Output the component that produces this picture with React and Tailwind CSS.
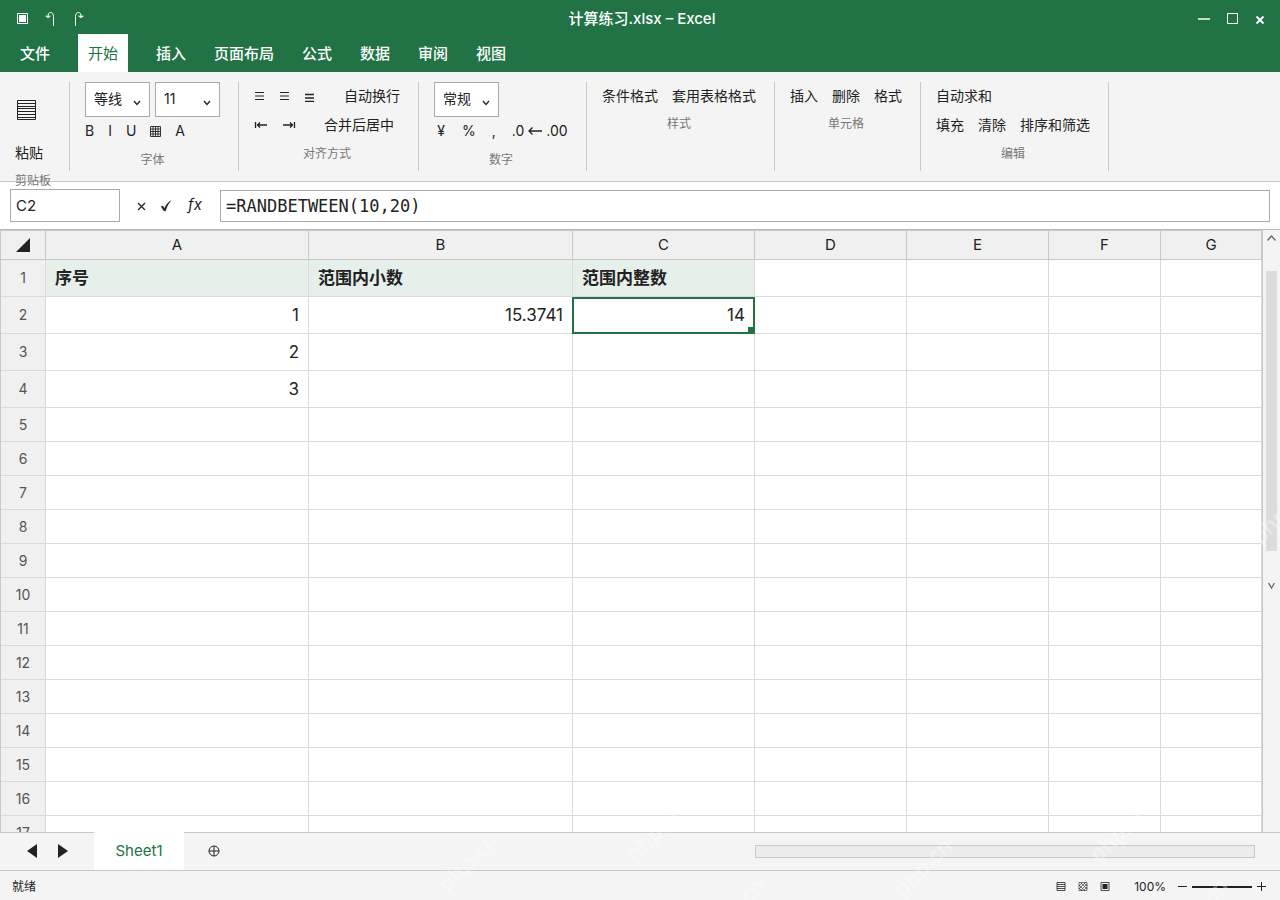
import clsx from "clsx";

const MENU = ["文件", "开始", "插入", "页面布局", "公式", "数据", "审阅", "视图"];

const COLUMNS = [
  { name: "A", width: "w-[263px]" },
  { name: "B", width: "w-[264px]" },
  { name: "C", width: "w-[182px]" },
  { name: "D", width: "w-[152px]" },
  { name: "E", width: "w-[142px]" },
  { name: "F", width: "w-[112px]" },
  { name: "G", width: "w-[101px]" },
];

const DATA = [
  ["序号", "范围内小数", "范围内整数"],
  ["1", "15.3741", "14"],
  ["2"],
  ["3"],
];

const ROWS = Array.from({ length: 17 }, (_, i) => i + 1);

const WATERMARKS = [
  { x: 467, y: 862 },
  { x: 655, y: 832 },
  { x: 922, y: 867 },
  { x: 1118, y: 832 },
  { x: 735, y: 907 },
  { x: 1198, y: 907 },
  { x: 1280, y: 514 },
];

function Icon({ className, width = 14, height = 14, children }) {
  return (
    <svg
      className={className}
      width={width}
      height={height}
      viewBox={`0 0 ${width} ${height}`}
      fill="none"
      stroke="currentColor"
      aria-hidden="true"
    >
      {children}
    </svg>
  );
}

function TitleBar() {
  return (
    <header className="grid h-[34px] grid-cols-3 items-center pt-1 pr-[13px] pl-[17px] text-white">
      <div className="flex items-center gap-4">
        <button aria-label="保存" className="flex h-4 w-3 items-center justify-center">
          <Icon width={12} height={12} className="shrink-0">
            <path d="M.5.5h10v10h-10z" />
            <path d="M2 2h7v7h-7z" fill="currentColor" stroke="none" />
          </Icon>
        </button>
        <button aria-label="撤消" className="flex w-3 justify-center">
          <Icon width={12} height={14}>
            <path d="M8.500 14V4.500C8.500 2 7.500 .5 5.500 .5S3 2 3 5" />
            <path d="M.5 4L3 6l2.500-2z" fill="currentColor" strokeWidth=".5" />
          </Icon>
        </button>
        <button aria-label="恢复" className="flex w-3 justify-center">
          <Icon width={12} height={14}>
            <path d="M2.500 14V4.500C2.500 2 3.500 .5 5.500 .5S8 2 8 5" />
            <path d="M5.500 4L8 6l2.500-2z" fill="currentColor" strokeWidth=".5" />
          </Icon>
        </button>
      </div>
      <h1 className="text-center text-[15px] font-medium">计算练习.xlsx – Excel</h1>
      <div className="flex items-center justify-end gap-[14px]">
        <button aria-label="最小化">
          <Icon>
            <path d="M1 7h12" strokeWidth="1.500" />
          </Icon>
        </button>
        <button aria-label="最大化">
          <Icon>
            <path d="M2.500 1.500h10v10h-10z" />
          </Icon>
        </button>
        <button aria-label="关闭">
          <Icon>
            <path d="M3.500 4.500l7 7M10.500 4.500l-7 7" strokeWidth="1.800" />
          </Icon>
        </button>
      </div>
    </header>
  );
}

function MenuTabs() {
  return (
    <nav className="flex h-[38px] gap-2 px-[10px] text-[15px] font-medium text-white">
      {MENU.map((item) => (
        <button
          key={item}
          className={clsx(
            "px-[10px] pt-0.5",
            item === "开始" && "mx-[10px] bg-white font-normal text-[#217346]"
          )}
        >
          {item}
        </button>
      ))}
    </nav>
  );
}

function Group({ label, className, children }) {
  return (
    <section className={clsx("border-r border-[#c8c8c8] pl-[15px]", className)}>
      {children}
      <p className="text-center text-xs leading-5 text-[#777]">{label}</p>
    </section>
  );
}

function Select({ label, value }) {
  return (
    <span className="relative inline-block">
      <select
        aria-label={label}
        className="h-[35px] w-[65px] appearance-none border border-[#aaa] bg-white px-2 pb-0.5 text-sm"
      >
        <option>{value}</option>
      </select>
      <Icon width={8} height={6} className="pointer-events-none absolute right-[9px] bottom-[11px]">
        <path d="M1 1l3 3.500 3-3.500" strokeWidth="1.300" />
      </Icon>
    </span>
  );
}

function Lines({ low }) {
  return (
    <Icon width={11} height={12}>
      <path
        d={low ? "M1 4.500h9M1 8h9M1 11.500h9" : "M1 2.500h9M1 6h9M1 9.500h9"}
        strokeWidth={low ? 1.500 : 1.200}
      />
    </Icon>
  );
}

function Ribbon() {
  return (
    <div className="relative z-10 flex h-[110px] border-b border-[#c8c8c8] bg-[#f4f4f4] py-[10px] text-sm">
      <section className="w-[70px] border-r border-[#c8c8c8] pl-[15px]">
        <button className="block pt-[18px] text-left leading-5">
          <Icon width={22} height={22} className="mb-[21px]">
            <path d="M2.500.5h18v19h-18zM3 3.500h18M3 6.500h18M3 8.500h18M3 11.500h18M3 14.500h18M3 17.500h18" />
          </Icon>
          粘贴
        </button>
        <p className="mt-2 text-xs leading-5 text-[#777]">剪贴板</p>
      </section>

      <Group label="字体" className="w-[169px] pr-[18px]">
        <div className="flex gap-[5px]">
          <Select label="字体名称" value="等线" />
          <Select label="字号" value="11" />
        </div>
        <div className="mb-[3px] flex h-[30px] items-center gap-[14px] pb-0.5">
          <button>B</button>
          <button>I</button>
          <button>U</button>
          <button aria-label="边框">
            <Icon width={11} height={11}>
              <path
                d="M.5.5h10v10h-10zM.5 3h10M.5 5.500h10M.5 8h10M3 .5v10M5.500.5v10M8 .5v10"
                strokeWidth=".9"
              />
            </Icon>
          </button>
          <button>A</button>
        </div>
      </Group>

      <Group label="对齐方式" className="w-[180px] pr-[18px]">
        <div className="flex h-[29px] items-center gap-[14px] pb-0.5">
          <button aria-label="左对齐"><Lines /></button>
          <button aria-label="居中"><Lines /></button>
          <button aria-label="右对齐"><Lines low /></button>
          <button className="ml-[15px]">自动换行</button>
        </div>
        <div className="mb-1 flex h-[29px] items-center gap-[14px] pb-0.5">
          <button aria-label="减少缩进量">
            <Icon>
              <path d="M1.500 4v6M3 7h10M6 4.500L3.500 7 6 9.500" strokeWidth="1.300" />
            </Icon>
          </button>
          <button aria-label="增加缩进量">
            <Icon>
              <path d="M12.500 4v6M1 7h10M8 4.500l2.500 2.500L8 9.500" strokeWidth="1.300" />
            </Icon>
          </button>
          <button className="ml-[14px]">合并后居中</button>
        </div>
      </Group>

      <Group label="数字" className="w-[168px] pr-[18px]">
        <Select label="数字格式" value="常规" />
        <div className="mb-[3px] flex h-[30px] items-center gap-[14px] pb-0.5">
          <button className="w-[14px]">¥</button>
          <button>%</button>
          <button className="w-2">,</button>
          <button className="flex items-center gap-1">
            .0
            <Icon>
              <path d="M1 7h13M4.500 3.500L1 7l3.500 3.500" strokeWidth="1.300" />
            </Icon>
            .00
          </button>
        </div>
      </Group>

      <Group label="样式" className="w-[188px] pr-[18px]">
        <div className="mb-[3px] flex h-[29px] items-center gap-[14px] pb-0.5">
          <button>条件格式</button>
          <button>套用表格格式</button>
        </div>
      </Group>

      <Group label="单元格" className="w-[146px] pr-[18px]">
        <div className="mb-[3px] flex h-[29px] items-center gap-[14px] pb-0.5">
          <button>插入</button>
          <button>删除</button>
          <button>格式</button>
        </div>
      </Group>

      <Group label="编辑" className="w-[188px] pr-[18px]">
        <div className="flex h-[29px] items-center pb-0.5">
          <button>自动求和</button>
        </div>
        <div className="mb-1 flex h-[29px] items-center gap-[14px] pb-0.5">
          <button>填充</button>
          <button>清除</button>
          <button>排序和筛选</button>
        </div>
      </Group>
    </div>
  );
}

function FormulaBar() {
  return (
    <div className="flex h-12 items-center border-b border-[#b8b8b8] bg-white px-[10px]">
      <input
        aria-label="名称框"
        defaultValue="C2"
        className="h-[33px] w-[110px] border border-[#aaa] px-[5px] text-[15px]"
      />
      <div className="flex w-[100px] items-center justify-center gap-[11px]">
        <button aria-label="取消">
          <Icon>
            <path d="M4 4l7 7M11 4l-7 7" strokeWidth="1.300" />
          </Icon>
        </button>
        <button aria-label="输入">
          <Icon>
            <path
              d="M2 7.500L4 7l1.500 2.500C6.500 6.500 9 3 12 1.500 9 5 7.500 8.500 6.500 12H5z"
              fill="currentColor"
              strokeWidth=".3"
            />
          </Icon>
        </button>
        <button className="w-[22px] text-[15px] italic">fx</button>
      </div>
      <input
        aria-label="编辑栏"
        defaultValue="=RANDBETWEEN(10,20)"
        className="h-8 min-w-0 flex-1 border border-[#aaa] px-[5px] font-['DejaVu_Sans_Mono',monospace] text-[17px]"
      />
    </div>
  );
}

function Cell({ row, col, value }) {
  const header = row === 1 && value;
  const selected = row === 2 && col === 2;
  return (
    <td
      className={clsx(
        "border-r border-b border-[#dadada] px-[9px] pt-0.5 text-[17px]",
        header ? "bg-[#e6efea] text-left font-semibold" : "text-right",
        selected && "relative"
      )}
    >
      {value}
      {selected && (
        <span className="absolute -inset-x-px top-0 -bottom-px border-2 border-[#217346]">
          <span className="absolute right-0 bottom-0 size-[5px] bg-[#217346]" />
        </span>
      )}
    </td>
  );
}

function Sheet() {
  return (
    <main className="flex min-h-0 flex-1 bg-white">
      <div className="min-w-0 flex-1 overflow-hidden">
        <table className="w-full table-fixed border-separate border-spacing-0 border-t border-l border-[#c8c8c8]">
          <thead>
            <tr className="h-[29px] bg-[#f0f0f0] text-[15px]">
              <th aria-label="全选" className="w-[45px] border-r border-b border-[#c8c8c8]">
                <Icon className="ml-[15px]">
                  <path d="M14 0v14H0z" fill="currentColor" stroke="none" />
                </Icon>
              </th>
              {COLUMNS.map(({ name, width }) => (
                <th
                  key={name}
                  scope="col"
                  className={clsx("border-r border-b border-[#c8c8c8] font-normal", width)}
                >
                  {name}
                </th>
              ))}
            </tr>
          </thead>
          <tbody>
            {ROWS.map((row) => (
              <tr key={row} className={row <= 4 ? "h-[37px]" : "h-[34px]"}>
                <th
                  scope="row"
                  className="border-r border-b border-[#dadada] bg-[#f0f0f0] text-sm font-normal text-[#555]"
                >
                  {row}
                </th>
                {COLUMNS.map(({ name }, col) => (
                  <Cell key={name} row={row} col={col} value={DATA[row - 1]?.[col]} />
                ))}
              </tr>
            ))}
          </tbody>
        </table>
      </div>
      <div className="w-[18px] shrink-0 border-l border-[#c8c8c8] bg-[#f4f4f4] pl-[3px] text-[#666]">
        <button aria-label="向上滚动" className="block h-[41px]">
          <Icon width={12} height={41}>
            <path d="M1.500 10.500l4-4.500 4 4.500" strokeWidth="1.300" />
          </Icon>
        </button>
        <div className="h-[280px] w-[11px] bg-[#dcdcdc]" />
        <button aria-label="向下滚动" className="block h-[41px]">
          <Icon width={12} height={41}>
            <path d="M2.500 32l3 5 3-5" strokeWidth="1.300" />
          </Icon>
        </button>
      </div>
    </main>
  );
}

function SheetBar() {
  return (
    <div className="flex h-[38px] shrink-0 items-center border-t border-[#c8c8c8] bg-[#f4f4f4] pr-[25px] pl-[26px]">
      <div className="flex w-[68px] gap-[18px] pb-0.5">
        <button aria-label="上一张工作表">
          <Icon>
            <path d="M11 0v14L1 7z" fill="currentColor" stroke="none" />
          </Icon>
        </button>
        <button aria-label="下一张工作表">
          <Icon>
            <path d="M0 0v14l10-7z" fill="currentColor" stroke="none" />
          </Icon>
        </button>
      </div>
      <button className="-mt-px h-[38px] w-[90px] bg-white text-[15px] text-[#217346]">
        Sheet1
      </button>
      <button aria-label="新建工作表" className="ml-6 pb-0.5">
        <Icon width={12} height={12}>
          <circle cx="6" cy="6" r="5" />
          <path d="M6 1v10M1 6h10" />
        </Icon>
      </button>
      <div className="ml-auto h-[13px] w-[500px] border border-[#c8c8c8] bg-[#ececec]" />
    </div>
  );
}

function StatusBar() {
  return (
    <footer className="flex h-[30px] shrink-0 items-center border-t border-[#c8c8c8] bg-[#f4f4f4] pt-[3px] pr-[14px] pl-3 text-xs">
      <span>就绪</span>
      <div className="ml-auto flex items-center gap-3">
        <button aria-label="普通">
          <Icon width={10} height={10}>
            <path d="M1 .5h8v8h-8zM1 2.500h8M1 4.500h8M1 6.500h8" strokeWidth=".8" />
          </Icon>
        </button>
        <button aria-label="页面布局">
          <Icon width={10} height={10}>
            <path
              d="M1 .5h8v8h-8zM1 3l6 6M1 6l3 3M3 1l6 6M6 1l3 3M1 4l3-3M1 7l6-6M3 8l6-6M6 8l3-3"
              strokeWidth=".6"
            />
          </Icon>
        </button>
        <button aria-label="分页预览">
          <Icon width={10} height={10}>
            <path d="M1 .5h8v8h-8z" strokeWidth=".8" />
            <path d="M2.500 2h5v5h-5z" fill="currentColor" stroke="none" />
          </Icon>
        </button>
        <span className="ml-3">100%</span>
        <div className="flex items-center gap-1">
          <button aria-label="缩小">
            <Icon width={10} height={10}>
              <path d="M0 4.500h9" />
            </Icon>
          </button>
          <span className="h-[2px] w-[60px] bg-[#222]" />
          <button aria-label="放大">
            <Icon width={10} height={10}>
              <path d="M1 4.500h9M5.500 0v9" />
            </Icon>
          </button>
        </div>
      </div>
    </footer>
  );
}

export default function App() {
  return (
    <div className="relative flex h-screen flex-col overflow-hidden font-['Inter','Noto_Sans_CJK_SC',sans-serif] text-[#222]">
      <div className="shrink-0 bg-[#217346]">
        <TitleBar />
        <MenuTabs />
      </div>
      <Ribbon />
      <FormulaBar />
      <Sheet />
      <SheetBar />
      <StatusBar />
      <div
        aria-hidden="true"
        className="pointer-events-none absolute inset-0 z-20 overflow-hidden font-['Open_Sans',sans-serif] text-[22px] font-semibold text-white/35"
      >
        {WATERMARKS.map(({ x, y }) => (
          <span
            key={x}
            className="absolute -translate-1/2 -rotate-45"
            style={{ left: x, top: y }}
          >
            php.cn
          </span>
        ))}
      </div>
    </div>
  );
}
